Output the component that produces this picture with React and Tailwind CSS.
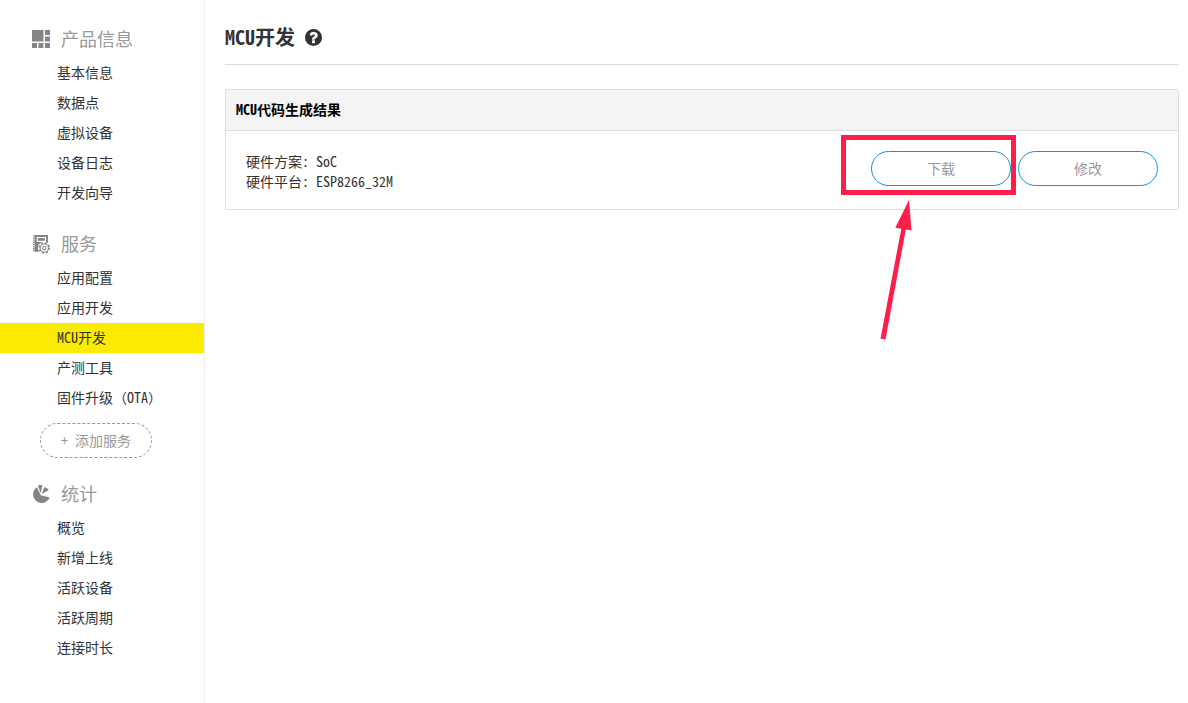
function ProductIcon() {
  return (
    <svg className="size-[18px] shrink-0" viewBox="0 0 18 18" fill="#858585" aria-hidden="true">
      <path d="M0 0h11.5v11.5H0zM13 0h5v5h-5zM13 6.500h5v5h-5zM0 13h5v5H0zM6.500 13h5v5h-5zM13 13h5v5h-5z" />
    </svg>
  );
}

function ServiceIcon() {
  return (
    <svg className="size-[18px] shrink-0 overflow-visible" viewBox="0 0 18 18" aria-hidden="true">
      <path fill="#858585" d="M2.500 0H16v16.800H2.500z" />
      <path stroke="#858585" strokeWidth="1.500" strokeDasharray="1.100 1" d="M1.800 .5v16.300" />
      <path fill="none" stroke="#fff" strokeWidth="1.200" d="M5.300 2.500h8.200v3.800H5.300z" />
      <circle cx="12.300" cy="13" r="6.300" fill="#fff" />
      <circle cx="12.300" cy="13" r="5" fill="none" stroke="#858585" strokeWidth="1.500" strokeDasharray="1.960 1.967" />
      <circle cx="12.300" cy="13" r="4.100" fill="none" stroke="#858585" strokeWidth="1" />
      <circle cx="12.300" cy="13" r="1.700" fill="none" stroke="#858585" strokeWidth="1.100" />
    </svg>
  );
}

function StatsIcon() {
  return (
    <svg className="size-[18px] shrink-0 overflow-visible" viewBox="0 0 18 18" fill="#858585" aria-hidden="true">
      <path d="M8.800 10.300 5 2.200A8.600 8.600 0 1 0 17.700 12.600z" />
      <path d="M8.900 8.400 5.700.6Q8-.3 10.200.3z" />
      <path d="m9.900 8.900 2.300-7q2.900 1 4.600 3.200z" />
    </svg>
  );
}

const groups = [
  { title: "产品信息", Icon: ProductIcon, items: ["基本信息", "数据点", "虚拟设备", "设备日志", "开发向导"] },
  {
    title: "服务",
    Icon: ServiceIcon,
    items: ["应用配置", "应用开发", "MCU开发", "产测工具", "固件升级（OTA）"],
    action: "+ 添加服务",
  },
  { title: "统计", Icon: StatsIcon, items: ["概览", "新增上线", "活跃设备", "活跃周期", "连接时长"] },
];

function NavGroup({ title, Icon, items, action }) {
  return (
    <section>
      <h2 className="flex h-[38px] items-center gap-[11px] pl-8 text-lg text-[#999]">
        <Icon />
        <span className="pb-0.5">{title}</span>
      </h2>
      <ul>
        {items.map((item) => (
          <li key={item}>
            <a
              href="#"
              aria-current={item === "MCU开发" ? "page" : undefined}
              className="block pb-0.5 pl-[57px] leading-7 aria-[current=page]:bg-[#fbeb00]"
            >
              {item}
            </a>
          </li>
        ))}
      </ul>
      {action && (
        <button
          type="button"
          className="mt-2.5 ml-10 block h-[35px] w-28 rounded-full border border-dashed border-[#999] pb-0.5 text-[#999]"
        >
          {action}
        </button>
      )}
    </section>
  );
}

function PillButton({ children }) {
  return (
    <button type="button" className="block h-[35px] w-[140px] rounded-full border border-[#0d93dd] pb-0.5 text-[#999]">
      {children}
    </button>
  );
}

export default function App() {
  return (
    <div className="flex min-h-screen bg-white font-['Noto_Sans_Mono_CJK_SC','Noto_Sans_CJK_SC',monospace] text-sm text-[#333]">
      <nav className="flex w-[205px] shrink-0 flex-col gap-[17px] border-r border-[#f0f0f0] pt-5">
        {groups.map((group) => (
          <NavGroup key={group.title} {...group} />
        ))}
      </nav>

      <main className="min-w-0 flex-1 pr-[9px] pl-5">
        <header className="flex items-center gap-2.5 border-b border-[#ddd] pt-[23px] pb-[13px]">
          <h1 className="text-xl font-bold">MCU开发</h1>
          <svg className="size-[17px]" viewBox="0 128 1536 1536" fill="#333" aria-hidden="true">
            <path d="M896 1376v-192q0-14-9-23t-23-9h-192q-14 0-23 9t-9 23v192q0 14 9 23t23 9h192q14 0 23-9t9-23zm256-672q0-88-55.500-163t-138.500-116-170.500-41q-243 0-371 213-15 24 8 42l132 100q7 6 19 6 16 0 25-12 53-68 86-92 34-24 86-24 48 0 85.500 26t37.500 59q0 38-20 61t-68 45q-63 28-115.500 86.500t-52.500 125.500v36q0 14 9 23t23 9h192q14 0 23-9t9-23q0-19 21.500-49.500t54.500-49.500q32-18 49-28.500t46-35 44.500-48 28-60.500 12.500-81zm384 192q0 209-103 385.500t-279.500 279.500-385.500 103-385.500-103-279.500-279.500-103-385.500 103-385.500 279.500-279.500 385.500-103 385.500 103 279.500 279.500 103 385.500z" />
          </svg>
        </header>

        <section className="mt-6 rounded-xs border border-[#ddd]">
          <h2 className="border-b border-[#ddd] bg-[#f4f4f4] px-2.5 pb-0.5 leading-[38px] font-bold text-black">
            MCU代码生成结果
          </h2>
          <div className="flex items-start justify-between p-5 pb-[18px]">
            <div className="leading-5">
              <p>硬件方案: SoC</p>
              <p>硬件平台: ESP8266_32M</p>
            </div>
            <div className="flex gap-[7px]">
              <div className="relative">
                <PillButton>下载</PillButton>
                <span className="pointer-events-none absolute -top-4 -right-[5px] -left-[30px] h-[60px] border-[5px] border-[#ff1d4a]" />
                <svg
                  className="pointer-events-none absolute top-[49px] left-2 h-[140px] w-[34px]"
                  viewBox="0 0 34 140"
                  fill="#ff1d4a"
                  aria-hidden="true"
                >
                  <path d="m30 0 2.500 30.500-5.700-1L6.500 139.500l-5-.8L22.300 28.700l-6-1z" />
                </svg>
              </div>
              <PillButton>修改</PillButton>
            </div>
          </div>
        </section>
      </main>
    </div>
  );
}
